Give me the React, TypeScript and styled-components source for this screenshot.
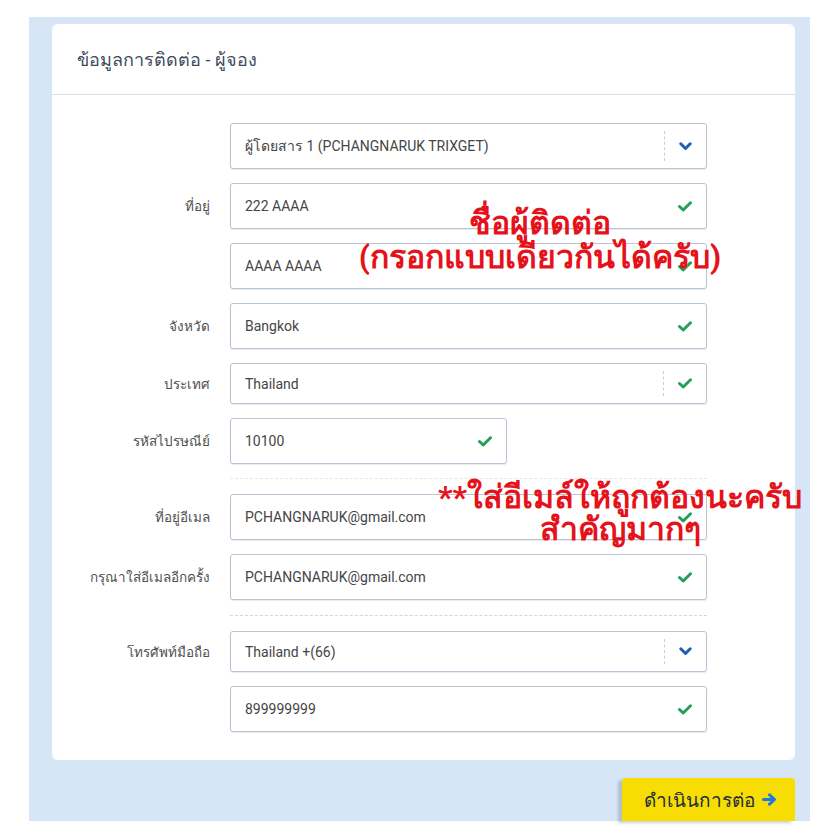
import React from "react";
import styled, { createGlobalStyle } from "styled-components";

const Global = createGlobalStyle`
  html, body { margin: 0; padding: 0; background: #ffffff; }
  body { font-family: Roboto, "Noto Sans", "DejaVu Sans", sans-serif; }
`;

const Root = styled.div`
  position: relative;
  width: 840px;
  height: 840px;
  overflow: hidden;
`;

const Frame = styled.div`
  width: 781px;
  margin: 17px 0 0 29px;
  padding: 7px 15px 0 23px;
  box-sizing: border-box;
  background: #d6e6f6;
  display: flex;
  flex-direction: column;
`;

const Card = styled.section`
  background: #ffffff;
  border-radius: 6px;
  height: 736px;
  display: flex;
  flex-direction: column;
`;

const Header = styled.header`
  height: 71px;
  box-sizing: border-box;
  padding-left: 25px;
  display: flex;
  align-items: center;
  border-bottom: 1px solid #d3e1ed;
  font-size: 18px;
  color: #3d4b5c;
`;

const Form = styled.div`
  display: flex;
  flex-direction: column;
  gap: 14px;
  padding-top: 28px;
`;

const Row = styled.div`
  display: grid;
  grid-template-columns: 158px auto;
  column-gap: 20px;
  align-items: center;
  justify-content: start;
`;

const Label = styled.label`
  text-align: right;
  font-size: 13.5px;
  color: #4f4f4f;
`;

const Field = styled.div<{ $h: number; $w?: number }>`
  height: ${(p) => p.$h}px;
  width: ${(p) => p.$w ?? 477}px;
  box-sizing: border-box;
  border: 1px solid #b8c4d4;
  border-radius: 3px;
  box-shadow: 0 1px 1px rgba(60, 80, 110, 0.12);
  background: #fff;
  display: flex;
  align-items: center;
  padding: 0 14px;
`;

const Value = styled.span`
  flex: 1;
  font-size: 14px;
  color: #454545;
  white-space: nowrap;
`;

const Divider = styled.span`
  align-self: stretch;
  margin: 7px 14px 7px 0;
  border-left: 1px dashed #c9ced6;
`;

const Separator = styled.div<{ $strong?: boolean }>`
  margin: ${(p) => (p.$strong ? "1px 0 1px 178px" : "0 0 1px 178px")};
  width: 477px;
  border-top: 1px dashed ${(p) => (p.$strong ? "#cfd6df" : "#e4e7eb")};
`;

const Footer = styled.div`
  display: flex;
  justify-content: flex-end;
  margin-top: 18px;
`;

const NextButton = styled.button`
  height: 43px;
  width: 173px;
  border: none;
  border-radius: 4px 4px 0 0;
  background: #f7dd03;
  box-shadow: -4px 2px 3px rgba(110, 120, 130, 0.35);
  font-family: inherit;
  font-size: 19px;
  color: #1f2d3b;
  display: flex;
  align-items: center;
  justify-content: center;
  gap: 7px;
  padding: 0 0 0 4px;
`;

const Note = styled.div<{ $left: number; $top: number; $width: number; $lh: number }>`
  position: absolute;
  left: ${(p) => p.$left}px;
  top: ${(p) => p.$top}px;
  width: ${(p) => p.$width}px;
  text-align: center;
  color: #e5121b;
  font-weight: 700;
  font-size: 32px;
  line-height: ${(p) => p.$lh}px;
  white-space: nowrap;
`;

const Check = () => (
  <svg width="14" height="11" viewBox="0 0 14 11">
    <polyline points="1.5,5.5 5.2,9 12.5,1.8" fill="none" stroke="#22a05a" strokeWidth="3" strokeLinecap="round" strokeLinejoin="round" />
  </svg>
);

const Chevron = () => (
  <svg width="13" height="9" viewBox="0 0 13 9">
    <polyline points="1.8,1.8 6.5,6.5 11.2,1.8" fill="none" stroke="#1d5fb4" strokeWidth="3" strokeLinecap="round" strokeLinejoin="round" />
  </svg>
);

const Arrow = () => (
  <svg width="15" height="13" viewBox="0 0 15 13">
    <path d="M1.5 6.5 H12 M7.5 1.8 L12.5 6.5 L7.5 11.2" fill="none" stroke="#1f78df" strokeWidth="3" strokeLinecap="round" strokeLinejoin="round" />
  </svg>
);

type FieldRowProps = {
  label?: string;
  value: string;
  h?: number;
  w?: number;
  select?: boolean;
  selectCheck?: boolean;
};

const FieldRow = ({ label, value, h = 46, w, select, selectCheck }: FieldRowProps) => (
  <Row>
    <Label>{label}</Label>
    <Field $h={h} $w={w}>
      <Value>{value}</Value>
      {(select || selectCheck) && <Divider />}
      {select ? <Chevron /> : <Check />}
    </Field>
  </Row>
);

export default function App() {
  return (
    <Root>
      <Global />
      <Frame>
        <Card>
          <Header>ข้อมูลการติดต่อ - ผู้จอง</Header>
          <Form>
            <FieldRow value="ผู้โดยสาร 1 (PCHANGNARUK TRIXGET)" select />
            <FieldRow label="ที่อยู่" value="222 AAAA" />
            <FieldRow value="AAAA AAAA" />
            <FieldRow label="จังหวัด" value="Bangkok" />
            <FieldRow label="ประเทศ" value="Thailand" h={41} selectCheck />
            <FieldRow label="รหัสไปรษณีย์" value="10100" w={277} />
            <Separator />
            <FieldRow label="ที่อยู่อีเมล" value="PCHANGNARUK@gmail.com" />
            <FieldRow label="กรุณาใส่อีเมลอีกครั้ง" value="PCHANGNARUK@gmail.com" />
            <Separator $strong />
            <FieldRow label="โทรศัพท์มือถือ" value="Thailand +(66)" h={41} select />
            <FieldRow value="899999999" />
          </Form>
        </Card>
        <Footer>
          <NextButton>
            ดำเนินการต่อ <Arrow />
          </NextButton>
        </Footer>
      </Frame>
      <Note $left={340} $top={206} $width={400} $lh={34}>
        ชื่อผู้ติดต่อ
        <br />
        (กรอกแบบเดียวกันได้ครับ)
      </Note>
      <Note $left={420} $top={481} $width={400} $lh={32}>
        **ใส่อีเมล์ให้ถูกต้องนะครับ
        <br />
        สำคัญมากๆ
      </Note>
    </Root>
  );
}
